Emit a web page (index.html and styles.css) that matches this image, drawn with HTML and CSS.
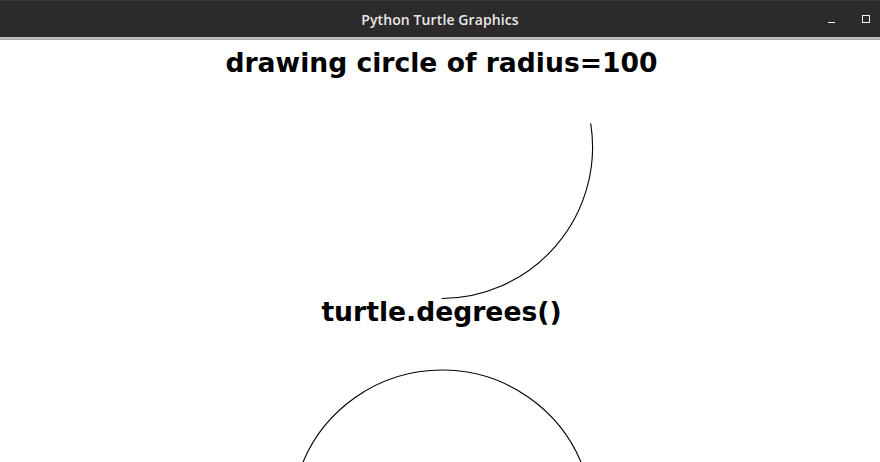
FILE: index.html
```html
<!DOCTYPE html>
<html>
<head>
<meta charset="utf-8">
<title>Python Turtle Graphics</title>
<link rel="stylesheet" href="styles.css">
</head>
<body>
<div class="window">
  <div class="titlebar">
    <div class="title">Python Turtle Graphics</div>
    <div class="controls">
      <span class="btn-min"></span>
      <span class="btn-max"></span>
    </div>
  </div>
  <div class="sep"></div>
  <svg class="canvas" width="880" height="422" viewBox="0 0 880 422">
    <text class="label" x="441.5" y="32">drawing circle of radius=100</text>
    <path class="line" d="M 441.5 258.5 A 151.5 151.5 0 0 0 590.7 83.3"/>
    <text class="label" x="441.5" y="281">turtle.degrees()</text>
    <path class="line" d="M 299.9 430 A 151 151 0 0 1 584.1 430"/>
  </svg>
</div>
</body>
</html>
```
FILE: styles.css
```css
html, body {
  margin: 0;
  padding: 0;
  background: #ffffff;
  overflow: hidden;
}
.window {
  width: 880px;
  height: 462px;
  display: flex;
  flex-direction: column;
}
.titlebar {
  height: 37px;
  background: #2c2a2a;
  border-top: 1px solid #3a3838;
  box-sizing: border-box;
  position: relative;
  display: flex;
  align-items: center;
  justify-content: center;
}
.title {
  font-family: "Open Sans", "Noto Sans", sans-serif;
  font-weight: 600;
  font-size: 14px;
  color: #e8e8e8;
  letter-spacing: 0.1px;
  padding-top: 1px;
}
.controls {
  position: absolute;
  right: 0;
  top: 0;
  height: 36px;
}
.btn-min {
  position: absolute;
  left: -52px;
  top: 21px;
  width: 7px;
  height: 1px;
  background: #f0f0f0;
}
.btn-max {
  position: absolute;
  left: -18px;
  top: 14px;
  width: 6px;
  height: 6px;
  border: 1px solid #f0f0f0;
}
.sep {
  height: 3px;
  background: linear-gradient(#c4c4c4, #a9a9a9);
  flex: none;
}
.canvas {
  display: block;
  flex: none;
}
.label {
  font-family: "DejaVu Sans", sans-serif;
  font-weight: bold;
  font-size: 26.6px;
  text-anchor: middle;
  fill: #000000;
}
.line {
  fill: none;
  stroke: #000000;
  stroke-width: 1.1;
}
```
